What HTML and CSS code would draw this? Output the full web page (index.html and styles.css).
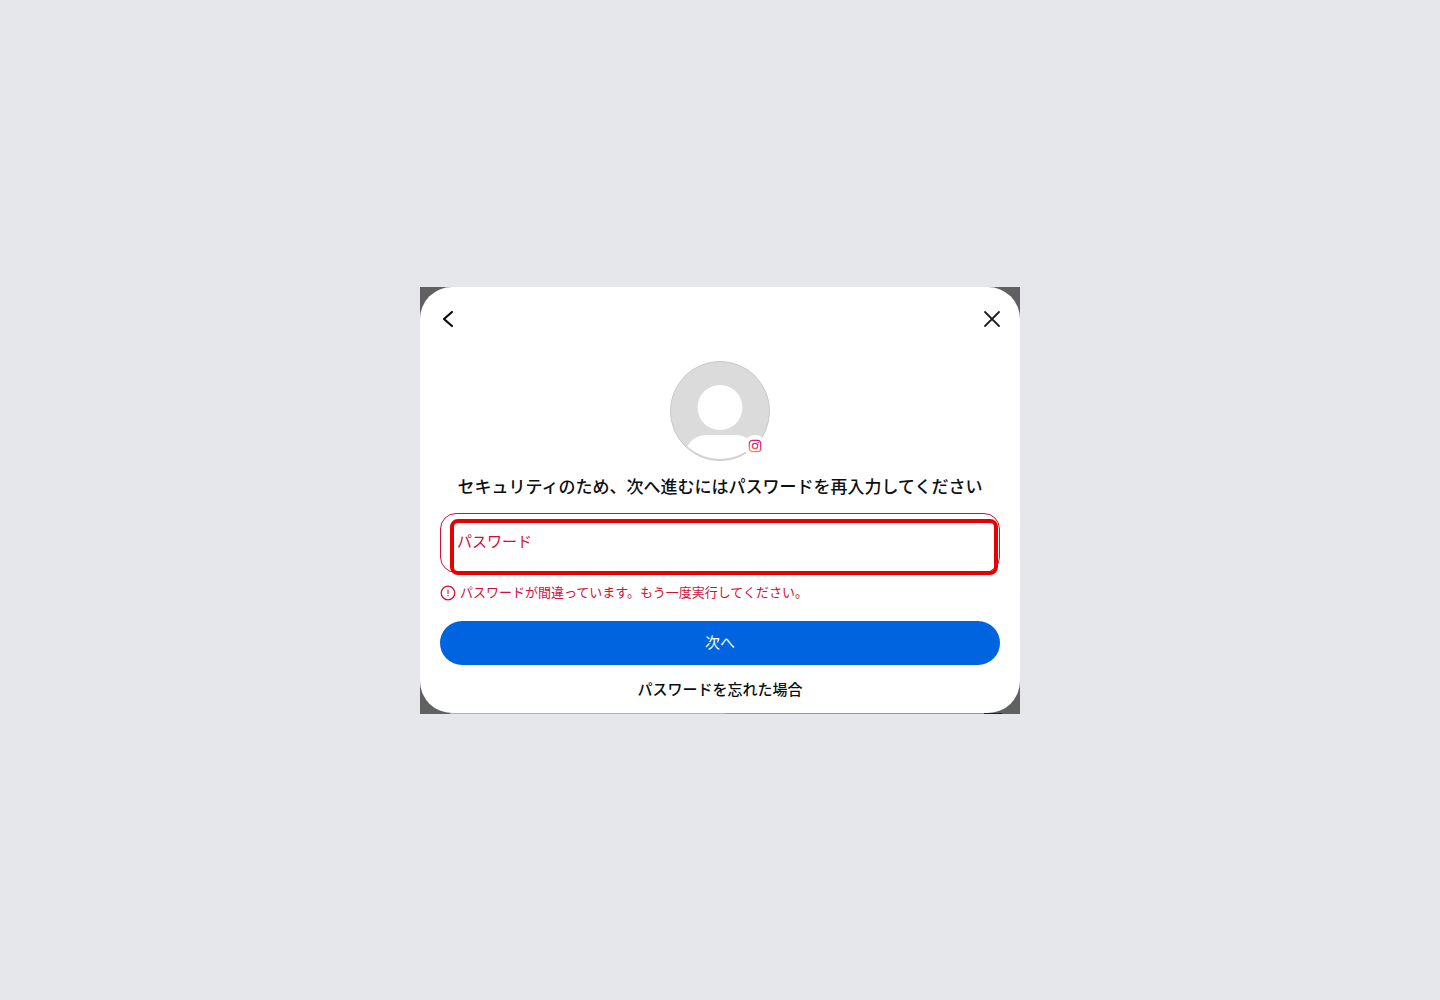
FILE: index.html
```html
<!doctype html>
<html lang="ja">
<head>
<meta charset="utf-8">
<meta name="viewport" content="width=device-width, initial-scale=1">
<title>パスワードの再入力</title>
<link rel="stylesheet" href="styles.css">
</head>

<body>
<div class="backdrop">
<main class="dialog">
	<div class="bar">
		<button type="button" class="icon_btn" aria-label="戻る">
			<svg width="24" height="24" viewBox="0 0 24 24"><path d="M16 5L8 12L16 19" fill="none" stroke="#080c0e" stroke-width="2.200" stroke-linecap="round" stroke-linejoin="round"/></svg>
		</button>
		<button type="button" class="icon_btn" aria-label="閉じる">
			<svg width="24" height="24" viewBox="0 0 24 24"><path d="M5 5L19 19M19 5L5 19" fill="none" stroke="#1c1e21" stroke-width="1.800" stroke-linecap="round"/></svg>
		</button>
	</div>

	<div class="avatar">
		<svg width="100" height="100" viewBox="0 0 100 100">
			<defs>
				<clipPath id="inner"><circle cx="50" cy="48.500" r="49.200"/></clipPath>
			</defs>
			<circle cx="50" cy="50" r="49.500" fill="#dbdbdb" stroke="#c8c8c8"/>
			<circle cx="50" cy="46.500" r="22.500" fill="#fff"/>
			<path clip-path="url(#inner)" d="M16 87C21 79 27 74 36 74H66C75 74 80 79 86 87V100H16Z" fill="#fff"/>
		</svg>
		<span class="badge">
			<svg width="14" height="14" viewBox="0 0 14 14">
				<defs>
					<linearGradient id="insta" gradientUnits="userSpaceOnUse" x1="2" y1="14" x2="8" y2="0">
						<stop offset="0" stop-color="#ffb43c"/>
						<stop offset="0.300" stop-color="#fa6a4a"/>
						<stop offset="0.600" stop-color="#e62a72"/>
						<stop offset="1" stop-color="#cc1a90"/>
					</linearGradient>
				</defs>
				<g fill="none" stroke="url(#insta)" stroke-width="1.200">
					<rect x="1.300" y="1.300" width="11.400" height="11.400" rx="3.200"/>
					<circle cx="7" cy="7" r="2.700"/>
				</g>
				<circle cx="10.200" cy="3.800" r="0.800" fill="#d01a88"/>
			</svg>
		</span>
	</div>

	<h1 class="title">セキュリティのため、次へ進むにはパスワードを再入力してください</h1>

	<form>
		<div class="field">
			<label for="password">パスワード</label>
			<input type="password" id="password" aria-describedby="error">
			<span class="highlight"></span>
		</div>
		<p class="error" id="error">
			<svg width="16" height="16" viewBox="0 0 16 16"><circle cx="8" cy="8" r="6.800" fill="none" stroke="#d0103a" stroke-width="1.300"/><path d="M8 5V8.500" stroke="#d0103a" stroke-width="1.100" stroke-linecap="round"/><circle cx="8" cy="10.800" r="0.700" fill="#d0103a"/></svg>
			<span>パスワードが間違っています。もう一度実行してください。</span>
		</p>
		<button type="submit" class="next">次へ</button>
		<button type="button" class="forgot">パスワードを忘れた場合</button>
	</form>
</main>
</div>
</body>
</html>
```
FILE: styles.css
```css
*{margin:0;padding:0;box-sizing:border-box}
body{min-height:100vh; display:flex; align-items:center; justify-content:center; background:#e5e7eb; font-family:"Noto Sans CJK JP",sans-serif; color:#0c0f11;}
button{border:0; background:none; font-family:inherit; color:inherit; cursor:pointer;}
svg{display:block; flex:none;}

/* the dimmed page shows in the corners and along the bottom edge */
.backdrop{width:100%; max-width:600px; padding-bottom:1px; background:linear-gradient(to right,#606060 5%,#b0b0b2 5%,#b0b0b2 51%,#8c9aae 51%,#8c9aae 94%,#0a2350 94%,#0a2350 97%,#606060 97%) bottom/100% 1px no-repeat #606060;}
.dialog{background:#fff; border-radius:32px; overflow:hidden;}

.bar{display:flex; justify-content:space-between; padding:20px 16px 0;}
.icon_btn{width:24px; height:24px;}

.avatar{position:relative; width:100px; margin:30px auto 13px;}
.badge{position:absolute; right:4px; bottom:4px; width:22px; height:22px; padding:4px; border-radius:50%; background:#fff;}

.title{padding:0 20px; font-size:17px; line-height:24px; font-weight:500; text-align:center;}

form{padding:15px 20px 0;}
.field{position:relative; height:60px; padding:15px 16px; border:1px solid #d0103a; border-radius:16px;}
.field label{display:block; font-size:15px; line-height:24px; color:#d0103a;}
.field input{display:block; width:100%; height:16px; border:0; outline:0; background:none; font-size:15px;}
.highlight{position:absolute; top:5px; right:1px; bottom:-3px; left:9px; border:4px solid #e60000; border-radius:8px; pointer-events:none;}

.error{display:flex; align-items:center; gap:4px; margin-top:10px; font-size:13px; line-height:18px; color:#d0103a;}
.error svg{margin-top:2px;}
.next{display:block; width:100%; height:44px; margin-top:20px; padding-bottom:2px; border-radius:22px; background:#0064e0; font-size:15px; color:#fff;}
.forgot{display:block; width:100%; height:48px; font-size:15px; font-weight:500;}
```
